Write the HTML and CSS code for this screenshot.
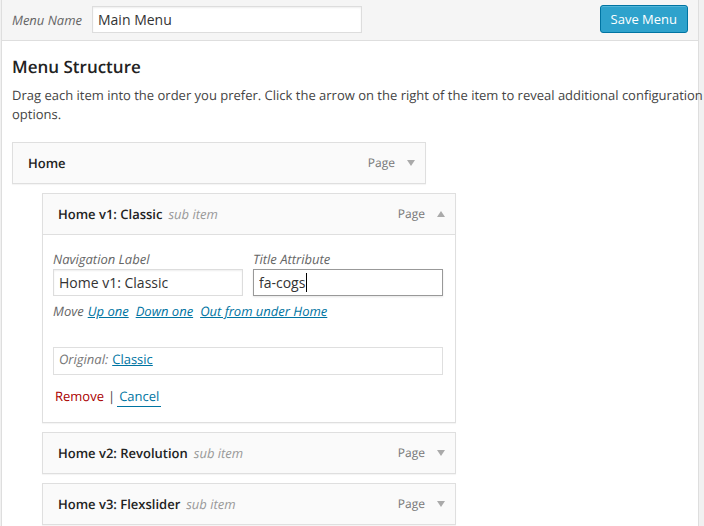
FILE: index.html
```html
<!DOCTYPE html>
<html lang="en">
<head>
<meta charset="utf-8">
<title>Edit Menu</title>
<link rel="stylesheet" href="styles.css">
</head>
<body>
<main class="menu-edit">
  <header class="menu-header">
    <label class="menu-name" for="menu-name">Menu Name</label>
    <input class="text-input menu-name-input" id="menu-name" type="text" value="Main Menu">
    <button class="save" type="button">Save Menu</button>
  </header>
  <section class="menu-body">
    <h1 class="heading">Menu Structure</h1>
    <p class="intro">Drag each item into the order you prefer. Click the arrow on the right of the item to reveal additional configuration options.</p>
    <ul class="menu-items">
      <li class="item">
        <div class="bar">
          <span class="title">Home</span>
          <span class="type">Page</span>
          <button class="toggle" type="button" aria-label="Expand Home"><svg class="arrow" viewBox="0 0 8 6"><path d="M0 0h8L4 6z"/></svg></button>
        </div>
      </li>
      <li class="item sub">
        <div class="bar">
          <span class="title">Home v1: Classic</span>
          <span class="sub-label">sub item</span>
          <span class="type">Page</span>
          <button class="toggle" type="button" aria-label="Collapse Home v1: Classic"><svg class="arrow" viewBox="0 0 8 6"><path d="M0 6h8L4 0z"/></svg></button>
        </div>
        <div class="settings">
          <div class="fields">
            <div class="field">
              <label for="nav-label">Navigation Label</label>
              <input class="text-input" id="nav-label" type="text" value="Home v1: Classic">
            </div>
            <div class="field">
              <label for="title-attr">Title Attribute</label>
              <div class="input-wrap">
                <input class="text-input active" id="title-attr" type="text" value="fa-cogs">
                <span class="caret"></span>
              </div>
            </div>
          </div>
          <p class="move"><span>Move</span><a href="#">Up one</a><a href="#">Down one</a><a href="#">Out from under Home</a></p>
          <p class="original"><span>Original:</span><a href="#">Classic</a></p>
          <p class="actions"><a class="remove" href="#">Remove</a><span>|</span><a class="cancel" href="#">Cancel</a></p>
        </div>
      </li>
      <li class="item sub">
        <div class="bar">
          <span class="title">Home v2: Revolution</span>
          <span class="sub-label">sub item</span>
          <span class="type">Page</span>
          <button class="toggle" type="button" aria-label="Expand Home v2: Revolution"><svg class="arrow" viewBox="0 0 8 6"><path d="M0 0h8L4 6z"/></svg></button>
        </div>
      </li>
      <li class="item sub">
        <div class="bar">
          <span class="title">Home v3: Flexslider</span>
          <span class="sub-label">sub item</span>
          <span class="type">Page</span>
          <button class="toggle" type="button" aria-label="Expand Home v3: Flexslider"><svg class="arrow" viewBox="0 0 8 6"><path d="M0 0h8L4 6z"/></svg></button>
        </div>
      </li>
    </ul>
  </section>
</main>
</body>
</html>
```
FILE: styles.css
```css
* {
  box-sizing: border-box;
}

body {
  margin: 0;
  padding: 0 5px 0 1px;
  background: #f1f1f1;
  color: #444;
  font: 13px/19px "Open Sans", sans-serif;
  text-rendering: geometricPrecision;
}

h1, p, ul {
  margin: 0;
  padding: 0;
}

a {
  color: #0074a2;
}

.menu-edit {
  min-height: 100vh;
  border: solid #dedede;
  border-width: 0 1px;
  background: #fff;
}

.menu-header {
  display: flex;
  align-items: center;
  height: 41px;
  padding: 0 10px 2px;
  border-bottom: 1px solid #dedede;
  background: #f5f5f5;
}

.menu-name {
  width: 80px;
  padding-top: 2px;
  color: #666;
  font-style: italic;
}

.text-input {
  width: 100%;
  height: 27px;
  padding: 0 5px;
  border: 1px solid #ddd;
  border-radius: 0;
  background: #fff;
  box-shadow: inset 0 1px 2px rgba(0, 0, 0, .07);
  color: #333;
  font: 14px/19px "Open Sans", sans-serif;
  outline: 0;
}

.text-input:focus,
.text-input.active {
  border-color: #999;
  box-shadow: 0 1px 2px rgba(0, 0, 0, .1);
}

.menu-name-input {
  width: 270px;
}

.save {
  height: 28px;
  margin-left: auto;
  padding: 0 10px;
  border: 1px solid #0074a2;
  border-radius: 3px;
  background: #2ea2cc;
  box-shadow: inset 0 1px 0 rgba(120, 200, 230, .5);
  color: #fff;
  font: 13px/19px "Open Sans", sans-serif;
}

.menu-body {
  padding: 14px 0 0 10px;
}

.heading {
  color: #222;
  font-size: 17px;
  font-weight: 600;
  line-height: 24px;
}

.intro {
  margin: 7px -6px 18px 0;
}

.menu-items {
  display: grid;
  gap: 9px;
  list-style: none;
}

.item {
  width: 414px;
  border: 1px solid #dfdfdf;
  box-shadow: 0 1px 1px rgba(0, 0, 0, .04);
}

.sub {
  margin-left: 30px;
}

.bar {
  display: flex;
  align-items: center;
  height: 40px;
  padding: 0 10px 0 15px;
  background: #fafafa;
}

.title {
  color: #222;
  font-weight: 600;
}

.sub-label {
  margin-left: 6px;
  color: #999;
  font-style: italic;
}

.type {
  margin-left: auto;
  padding-bottom: 2px;
  color: #777;
  font-size: 12px;
}

.toggle {
  display: flex;
  margin-left: 12px;
  padding: 0;
  border: 0;
  background: none;
}

.arrow {
  width: 8px;
  height: 6px;
  fill: #aaa;
}

.settings {
  padding: 15px 12px 15px 10px;
  border-top: 1px solid #dfdfdf;
}

.fields {
  display: grid;
  grid-template-columns: 1fr 1fr;
  gap: 10px;
}

.field label {
  display: block;
  color: #666;
  font-style: italic;
}

.field .text-input {
  display: block;
}

.input-wrap {
  position: relative;
}

.caret {
  position: absolute;
  top: 4px;
  left: 53px;
  width: 1px;
  height: 19px;
  background: #000;
}

.move {
  display: flex;
  margin: 6px 0 26px;
  color: #666;
  font-style: italic;
}

.move span,
.original span {
  margin-right: 4px;
}

.move a {
  margin-right: 7px;
}

.original {
  display: flex;
  height: 28px;
  padding: 2px 5px;
  border: 1px solid #dfdfdf;
}

.original span {
  color: #777;
  font-style: italic;
}

.actions {
  display: flex;
  align-items: flex-start;
  margin-top: 12px;
  padding-left: 2px;
}

.actions a {
  text-decoration: none;
}

.actions span {
  margin: 0 2px 0 4px;
}

.remove {
  color: #a00;
}

.actions .cancel {
  padding: 0 2px;
  border-bottom: 1px solid #0074a2;
}
```
